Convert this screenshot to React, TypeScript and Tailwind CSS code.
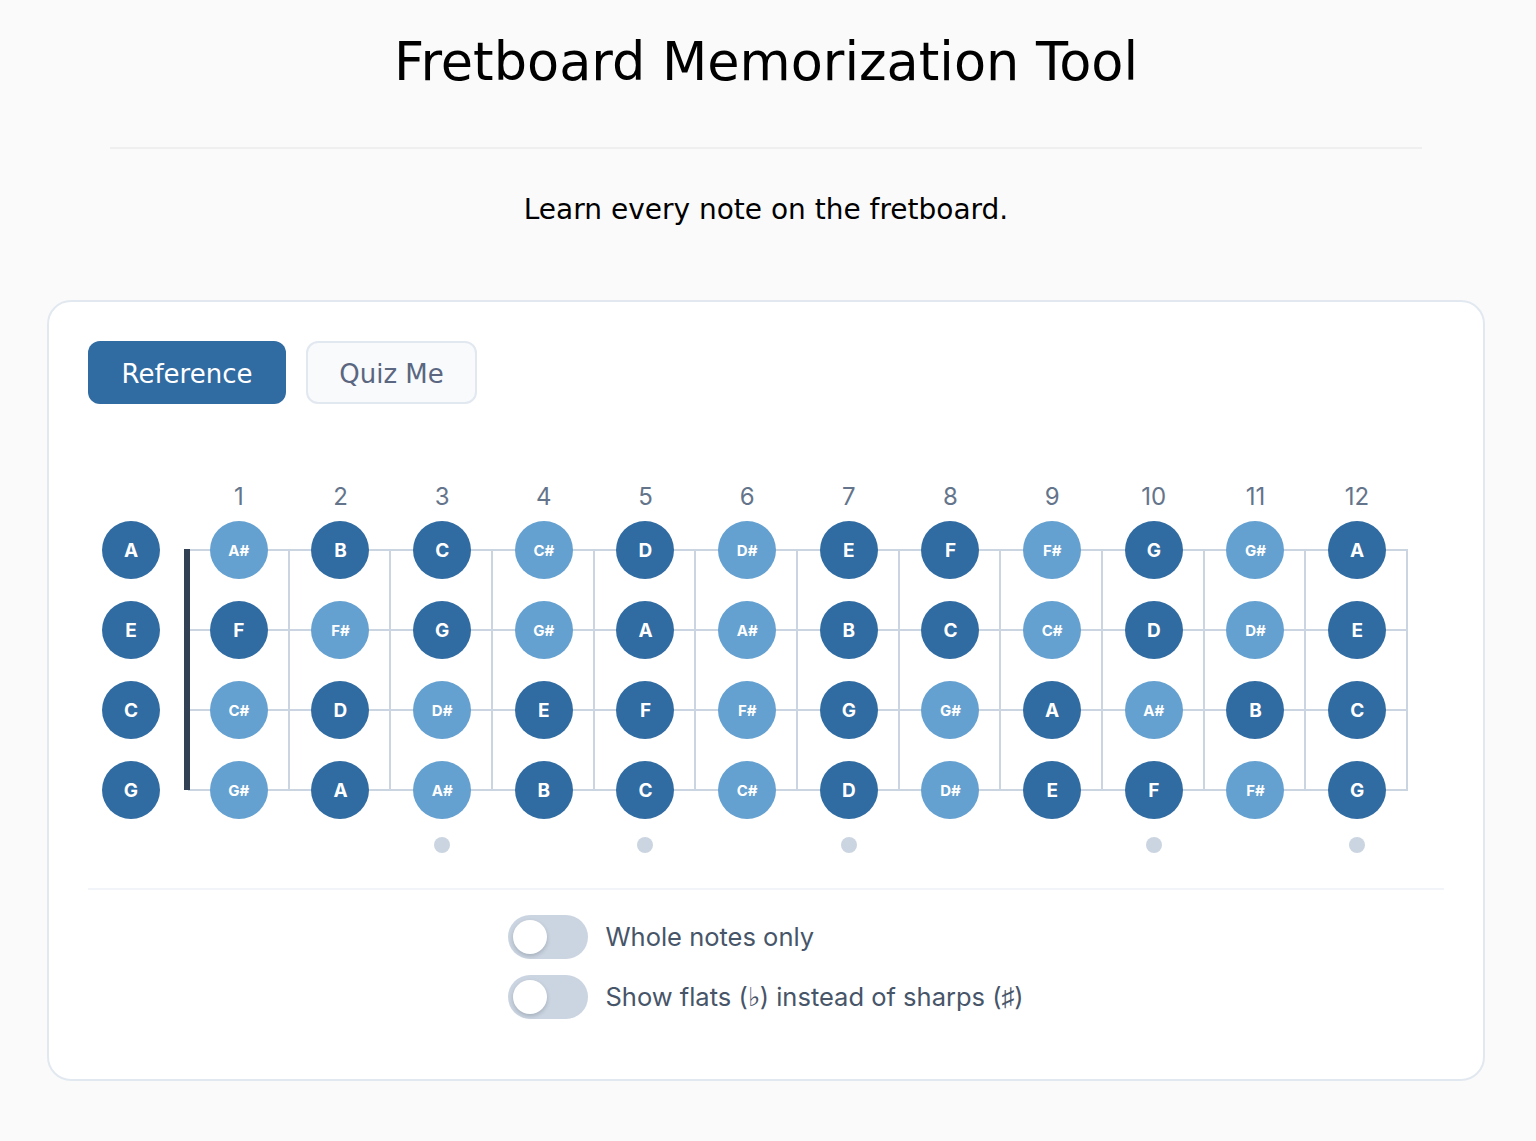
import { useState } from 'react'

// chromatic scale, sharps version
const NOTES = ['C', 'C#', 'D', 'D#', 'E', 'F', 'F#', 'G', 'G#', 'A', 'A#', 'B']
const STRINGS = ['A', 'E', 'C', 'G'] // top to bottom
const FRETS = [1, 2, 3, 4, 5, 6, 7, 8, 9, 10, 11, 12]
const DOTS = [3, 5, 7, 10, 12]

const noteAt = (open: string, fret: number) => NOTES[(NOTES.indexOf(open) + fret) % 12]

function NoteDot({ name }: { name: string }) {
  const sharp = name.includes('#')
  return (
    <div
      className={`w-[58px] h-[58px] rounded-full flex items-center justify-center pt-[2px] text-white font-bold font-['Inter',sans-serif] ${
        sharp ? 'bg-[#64a0d0] text-[15px]' : 'bg-[#306ba2] text-[19px]'
      }`}
    >
      {name}
    </div>
  )
}

function Toggle({ label }: { label: string }) {
  const [on, setOn] = useState(false)
  return (
    <div className="flex items-center gap-[17px] h-[44px]">
      <button
        onClick={() => setOn(!on)}
        className={`w-[80px] h-[44px] rounded-full flex items-center px-[5px] ${
          on ? 'bg-[#306ba2] justify-end' : 'bg-[#cbd5e1] justify-start'
        }`}
      >
        <span className="w-[34px] h-[34px] rounded-full bg-white shadow-[0_2px_4px_rgba(15,23,42,0.2)]" />
      </button>
      <span className="font-['Inter',sans-serif] text-[25.5px] text-[#475569]">{label}</span>
    </div>
  )
}

export default function App() {
  const [mode, setMode] = useState<'ref' | 'quiz'>('ref')

  return (
    <div className="min-h-screen bg-[#fafafa] font-['DejaVu_Sans',sans-serif] text-black">
      <div className="w-[1438px] ml-[47px] pb-[60px]">
        <h1 className="pt-[30px] text-center text-[52.5px] leading-[64px]">Fretboard Memorization Tool</h1>
        <hr className="mt-[53px] mx-[63px] border-0 border-t-2 border-[#efefef]" />
        <p className="mt-[43px] text-center text-[28px] leading-[36px]">Learn every note on the fretboard.</p>

        {/* main card */}
        <div className="mt-[72px] bg-white border-2 border-[#e2e8f0] rounded-[24px] px-[39px] pt-[39px] pb-[60px]">
          <div className="flex gap-[20px]">
            <button
              onClick={() => setMode('ref')}
              className={`w-[198px] h-[63px] rounded-[12px] text-[26px] pt-[3px] ${
                mode === 'ref' ? 'bg-[#306ba2] text-white' : 'bg-[#f8fafc] border-2 border-[#e2e8f0] text-[#5b6780]'
              }`}
            >
              Reference
            </button>
            <button
              onClick={() => setMode('quiz')}
              className={`w-[171px] h-[63px] rounded-[12px] text-[26px] pt-[3px] ${
                mode === 'quiz' ? 'bg-[#306ba2] text-white' : 'bg-[#f8fafc] border-2 border-[#e2e8f0] text-[#5b6780]'
              }`}
            >
              Quiz Me
            </button>
          </div>

          {/* fretboard */}
          <div className="mt-[80px] ml-[14px]">
            <div className="flex pl-[86px] h-[26px]">
              {FRETS.map((f) => (
                <div key={f} className="w-[101.67px] text-center font-['Inter',sans-serif] text-[24px] leading-[26px] text-[#64748b]">
                  {f}
                </div>
              ))}
            </div>

            <div className="flex">
              <div className="w-[58px] flex flex-col">
                {STRINGS.map((s) => (
                  <div key={s} className="h-[80px] flex items-center justify-center">
                    <NoteDot name={s} />
                  </div>
                ))}
              </div>
              <div className="w-[28px]" />
              <div className="relative w-[1220px]">
                {/* strings + frets */}
                <div className="absolute inset-y-[39px] left-0 right-0 grid grid-cols-12 grid-rows-3 border-t-2 border-[#cbd5e1]">
                  {Array.from({ length: 36 }).map((_, i) => (
                    <div key={i} className="border-r-2 border-b-2 border-[#cbd5e1]" />
                  ))}
                </div>
                {/* nut */}
                <div className="absolute left-[-4px] top-[39px] w-[6px] h-[241px] bg-[#334155]" />
                <div className="relative grid grid-cols-12">
                  {STRINGS.map((s) =>
                    FRETS.map((f) => (
                      <div key={s + f} className="h-[80px] flex items-center justify-center">
                        <NoteDot name={noteAt(s, f)} />
                      </div>
                    ))
                  )}
                </div>
              </div>
            </div>

            <div className="flex pl-[86px] mt-[7px] h-[16px]">
              {FRETS.map((f) => (
                <div key={f} className="w-[101.67px] flex justify-center">
                  {DOTS.includes(f) && <div className="w-[16px] h-[16px] rounded-full bg-[#cbd5e1]" />}
                </div>
              ))}
            </div>
          </div>

          <div className="mt-[35px] border-t-2 border-[#f1f5f9]" />

          <div className="mt-[25px] flex justify-center">
            <div className="flex flex-col gap-[16px]">
              <Toggle label="Whole notes only" />
              <Toggle label="Show flats (♭) instead of sharps (♯)" />
            </div>
          </div>
        </div>
      </div>
    </div>
  )
}
